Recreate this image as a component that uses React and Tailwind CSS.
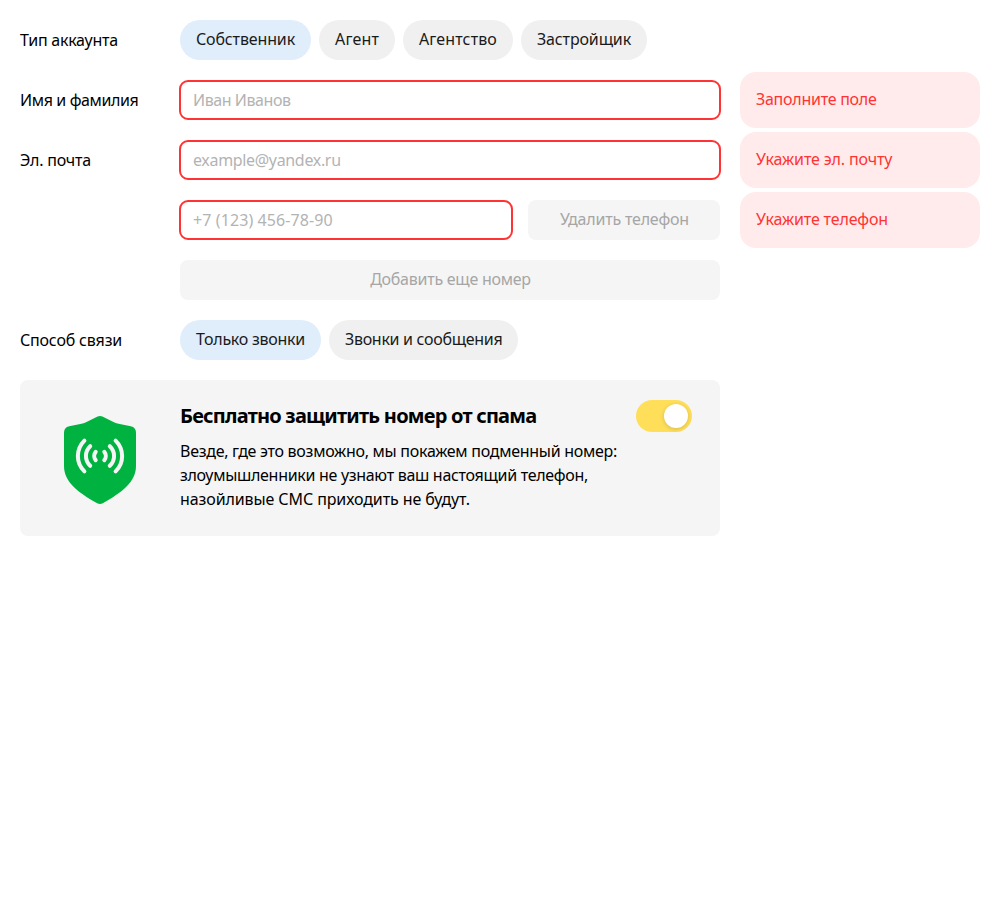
function Label({ children, className = '' }) {
  return (
    <div className="flex h-10 w-40 shrink-0 items-center whitespace-nowrap leading-5">
      <span className={className}>{children}</span>
    </div>
  );
}

function Pill({ children, active, className }) {
  return (
    <button
      type="button"
      className={`flex h-10 items-center rounded-full px-4 pb-0.5 whitespace-nowrap leading-5 text-[#1a1a1a] ${
        active ? 'bg-[#e0edfb]' : 'bg-[#f0f0f0]'
      } ${className}`}
    >
      {children}
    </button>
  );
}

function Field({ placeholder, type = 'text', className = '' }) {
  return (
    <input
      type={type}
      placeholder={placeholder}
      className={`-mx-px h-10 rounded-[9px] border-2 border-[#ff3333] bg-white px-3 leading-5 text-black outline-none placeholder:text-[#b3b3b3] placeholder:opacity-100 ${className}`}
    />
  );
}

function GrayButton({ children, className }) {
  return (
    <button
      type="button"
      disabled
      className={`flex h-10 items-center justify-center rounded-lg bg-[#f5f5f5] pb-0.5 pl-px whitespace-nowrap leading-5 text-[#a6a6a6] ${className}`}
    >
      {children}
    </button>
  );
}

function FieldError({ children, className }) {
  return (
    <div className="-my-2 ml-5 flex h-14 w-60 items-center rounded-2xl bg-[#ffebeb] px-4 pb-0.5 whitespace-nowrap leading-5 text-[#ff3333]">
      <span className={className}>{children}</span>
    </div>
  );
}

function ShieldIcon() {
  return (
    <svg width="72" height="88" viewBox="0 0 72 88" fill="none" className="block">
      <path
        d="M33.6.6a5.5 5.5 0 0 1 4.8 0L50.500 6.400Q52.500 7.300 54.500 7.700L66.800 10.300Q72 11.400 72 16.800V50C72 66 58 76.500 38.800 87.200Q36 88.700 33.200 87.200C14 76.500 0 66 0 50V16.800Q0 11.400 5.200 10.300L17.500 7.700Q19.500 7.300 21.500 6.400Z"
        fill="#00b341"
      />
      <g stroke="#f5f5f5" strokeWidth="4" strokeLinecap="round">
        <path d="M20.400 24.600C11.700 33.200 11.700 46.800 20.400 55.400" />
        <path d="M26.200 30.200C20.500 35.700 20.500 44.300 26.200 49.800" />
        <path d="M31.700 35.900C29.700 38.300 29.700 41.700 31.700 44.100" />
        <path d="M51.600 24.600C60.300 33.200 60.300 46.800 51.600 55.400" />
        <path d="M45.800 30.200C51.500 35.700 51.500 44.300 45.800 49.800" />
        <path d="M40.300 35.900C42.300 38.300 42.300 41.700 40.300 44.100" />
      </g>
    </svg>
  );
}

export default function App() {
  return (
    <div className="flex min-h-screen flex-col gap-5 bg-white p-5 font-['Noto_Sans','Open_Sans',sans-serif] text-base text-black">
      <div className="flex">
        <Label className="tracking-[-0.236px]">Тип аккаунта</Label>
        <div className="flex gap-2">
          <Pill active className="w-[131px] tracking-[-0.141px]">Собственник</Pill>
          <Pill className="w-[76px] tracking-[0.172px]">Агент</Pill>
          <Pill className="w-[110px] tracking-[0.128px]">Агентство</Pill>
          <Pill className="w-[126px] tracking-[-0.142px]">Застройщик</Pill>
        </div>
      </div>

      <div className="flex">
        <Label className="tracking-[-0.374px]">Имя и фамилия</Label>
        <Field placeholder="Иван Иванов" className="w-[542px] tracking-[-0.43px]" />
        <FieldError className="tracking-[-0.26px]">Заполните поле</FieldError>
      </div>

      <div className="flex">
        <Label className="tracking-[-0.205px]">Эл. почта</Label>
        <Field type="email" placeholder="example@yandex.ru" className="w-[542px] tracking-[-0.33px]" />
        <FieldError className="tracking-[-0.13px]">Укажите эл. почту</FieldError>
      </div>

      <div className="flex pl-40">
        <Field type="tel" placeholder="+7 (123) 456-78-90" className="w-[334px] tracking-[0.1px]" />
        <GrayButton className="ml-4 w-48 tracking-[-0.196px]">Удалить телефон</GrayButton>
        <FieldError className="tracking-[-0.148px]">Укажите телефон</FieldError>
      </div>

      <div className="flex pl-40">
        <GrayButton className="w-[540px] tracking-[-0.25px]">Добавить еще номер</GrayButton>
      </div>

      <div className="flex">
        <Label className="tracking-[-0.19px]">Способ связи</Label>
        <div className="flex gap-2">
          <Pill active className="w-[141px] tracking-[-0.255px]">Только звонки</Pill>
          <Pill className="w-[189px] tracking-[-0.3px]">Звонки и сообщения</Pill>
        </div>
      </div>

      <section className="flex h-[156px] w-[700px] rounded-lg bg-[#f5f5f5]">
        <div className="flex w-40 shrink-0 justify-center pt-9">
          <ShieldIcon />
        </div>
        <div className="w-[456px] shrink-0 whitespace-nowrap pt-6">
          <h2 className="font-['Noto_Sans','Open_Sans',sans-serif] text-xl leading-6 font-bold tracking-[-0.78px]">
            Бесплатно защитить номер от спама
          </h2>
          <p className="mt-[11px] leading-6">
            <span className="block tracking-[-0.275px]">Везде, где это возможно, мы покажем подменный номер:</span>
            <span className="block tracking-[-0.3px]">злоумышленники не узнают ваш настоящий телефон,</span>
            <span className="block tracking-[-0.097px]">назойливые СМС приходить не будут.</span>
          </p>
        </div>
        <button
          type="button"
          role="switch"
          aria-checked="true"
          className="mt-5 flex h-8 w-14 items-center justify-end rounded-full bg-[#ffde5a] p-1"
        >
          <span className="size-6 rounded-full bg-white shadow-[0_1px_4px_rgba(0,0,0,0.16)]" />
        </button>
      </section>
    </div>
  );
}
